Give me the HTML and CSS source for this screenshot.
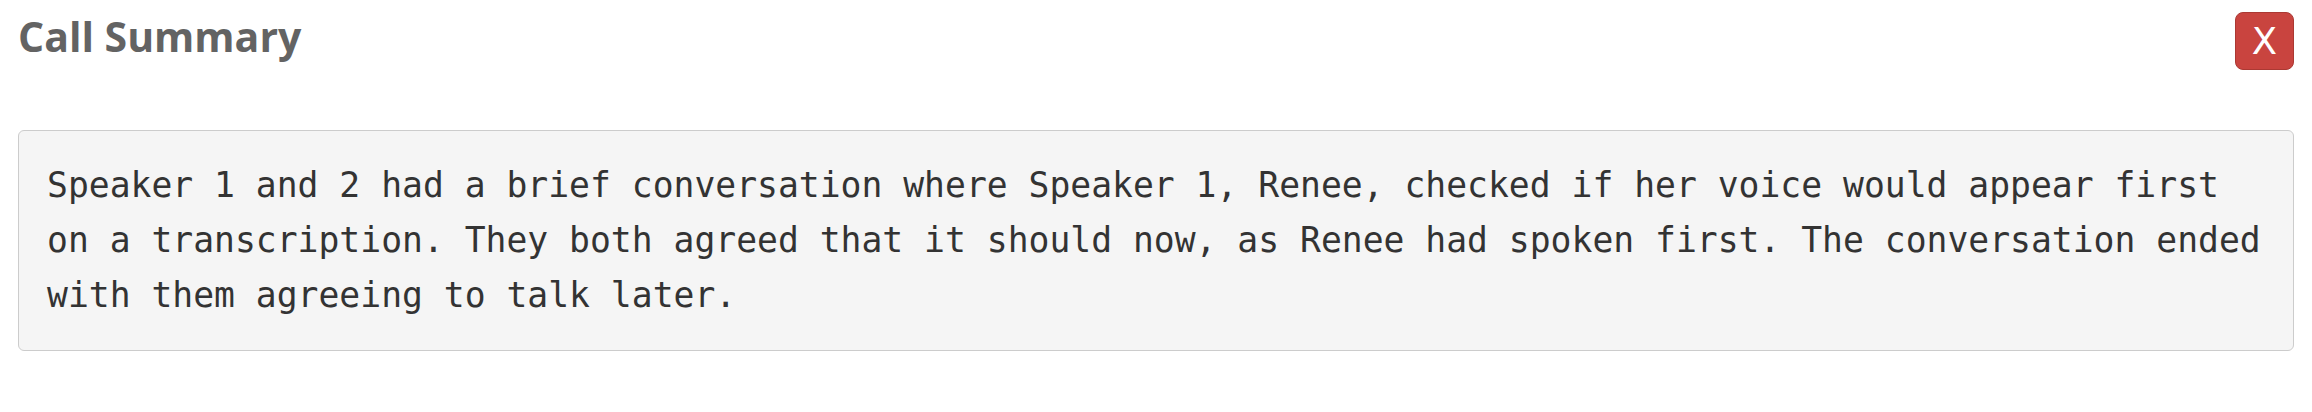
FILE: index.html
```html
<!DOCTYPE html>
<html lang="en">
<head>
<meta charset="utf-8">
<title>Call Summary</title>
<link rel="stylesheet" href="styles.css">
</head>
<body>
<div class="panel">
  <div class="panel-header">
    <h2 class="panel-title">Call Summary</h2>
    <button class="close-btn" type="button">X</button>
  </div>
  <div class="summary-box">Speaker 1 and 2 had a brief conversation where Speaker 1, Renee, checked if her voice would appear first on a transcription. They both agreed that it should now, as Renee had spoken first. The conversation ended with them agreeing to talk later.</div>
</div>
</body>
</html>
```
FILE: styles.css
```css
html, body {
  margin: 0;
  padding: 0;
  background: #ffffff;
}

.panel {
  padding: 0 18px;
}

.panel-header {
  display: flex;
  justify-content: space-between;
  align-items: flex-start;
  padding-top: 8px;
}

.panel-title {
  margin: 0;
  font-family: "Open Sans", "Liberation Sans", sans-serif;
  font-weight: 700;
  font-size: 41px;
  line-height: 56px;
  color: #636363;
}

.close-btn {
  display: flex;
  align-items: center;
  justify-content: center;
  margin-top: 4px;
  width: 59px;
  height: 58px;
  padding: 0;
  border: 1px solid #ab3933;
  border-radius: 8px;
  background: #c9443f;
  color: #ffffff;
  font-family: "DejaVu Sans", "Liberation Sans", sans-serif;
  font-weight: 400;
  font-size: 37px;
  line-height: 1;
}

.summary-box {
  margin-top: 60px;
  padding: 27px 26px 27px 28px;
  background: #f5f5f5;
  border: 1px solid #cccccc;
  border-radius: 6px;
  font-family: "DejaVu Sans Mono", "Liberation Mono", monospace;
  font-size: 34.7px;
  line-height: 55px;
  color: #333333;
}
```
